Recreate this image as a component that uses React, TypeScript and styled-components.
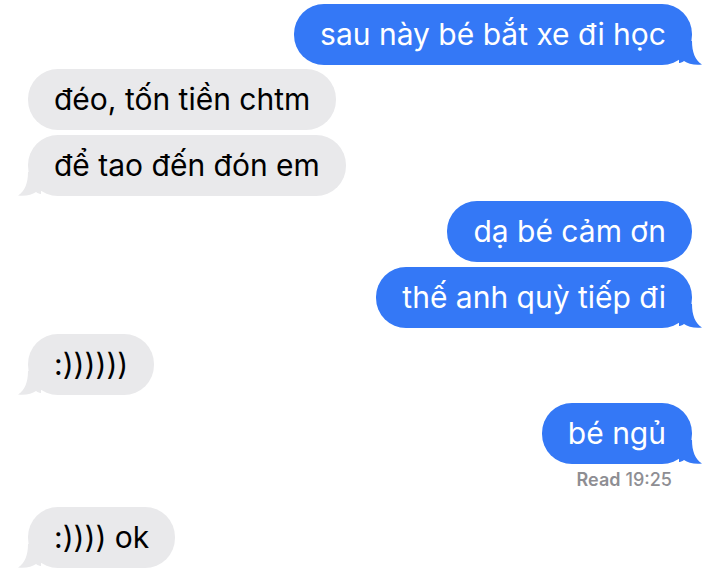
import React from "react";
import styled, { createGlobalStyle } from "styled-components";

const GlobalStyle = createGlobalStyle`
  html, body { margin: 0; padding: 0; background: #ffffff; }
  body { font-family: Inter, "Liberation Sans", Arial, sans-serif; }
`;

const Thread = styled.div`
  width: 719px;
  height: 576px;
  overflow: hidden;
  display: flex;
  flex-direction: column;
  background: #ffffff;
`;

const Row = styled.div<{ $me: boolean; $gap: number }>`
  display: flex;
  justify-content: ${(p) => (p.$me ? "flex-end" : "flex-start")};
  padding: ${(p) => (p.$me ? "0 27px 0 0" : "0 0 0 28px")};
  margin-top: ${(p) => p.$gap}px;
`;

const Bubble = styled.div<{ $me: boolean }>`
  position: relative;
  height: 61px;
  box-sizing: border-box;
  padding: 0 26px 1px 26px;
  display: flex;
  align-items: center;
  border-radius: 30px;
  background: ${(p) => (p.$me ? "#3478f6" : "#e9e9eb")};
  color: ${(p) => (p.$me ? "#ffffff" : "#000000")};
  font-size: 30px;
  white-space: nowrap;
`;

const Tail = styled.svg<{ $me: boolean }>`
  position: absolute;
  bottom: 0;
  width: 24px;
  height: 24px;
  ${(p) => (p.$me ? "right: -11px;" : "left: -11px; transform: scaleX(-1);")}
`;

const Receipt = styled.div`
  display: flex;
  justify-content: flex-end;
  gap: 5px;
  padding-right: 47px;
  margin-top: 5px;
  font-size: 18px;
  font-weight: 500;
  color: #8e8e93;
  line-height: 22px;
`;

const ReceiptLabel = styled.span`
  font-weight: 600;
`;

type Msg = { text: string; me: boolean; gap: number; tail: boolean };

const messages: Msg[] = [
  { text: "sau này bé bắt xe đi học", me: true, gap: 4, tail: true },
  { text: "đéo, tốn tiền chtm", me: false, gap: 4, tail: false },
  { text: "để tao đến đón em", me: false, gap: 5, tail: true },
  { text: "dạ bé cảm ơn", me: true, gap: 5, tail: false },
  { text: "thế anh quỳ tiếp đi", me: true, gap: 5, tail: true },
  { text: ":))))))", me: false, gap: 6, tail: true },
  { text: "bé ngủ", me: true, gap: 8, tail: true },
];

const BubbleTail = ({ me }: { me: boolean }) => (
  <Tail $me={me} viewBox="0 0 24 24">
    <path
      d="M0 0 H13 C13 11 16 19 23 23.5 C15 24.5 9 22.5 5 20 C3 21.5 1 22 0 22 Z"
      fill={me ? "#3478f6" : "#e9e9eb"}
    />
  </Tail>
);

const Message = ({ m }: { m: Msg }) => (
  <Row $me={m.me} $gap={m.gap}>
    <Bubble $me={m.me}>
      {m.text}
      {m.tail && <BubbleTail me={m.me} />}
    </Bubble>
  </Row>
);

export default function App() {
  return (
    <>
      <GlobalStyle />
      <Thread>
        {messages.map((m, i) => (
          <Message key={i} m={m} />
        ))}
        <Receipt>
          <ReceiptLabel>Read</ReceiptLabel>
          <span>19:25</span>
        </Receipt>
        <Message m={{ text: ":)))) ok", me: false, gap: 16, tail: true }} />
      </Thread>
    </>
  );
}
